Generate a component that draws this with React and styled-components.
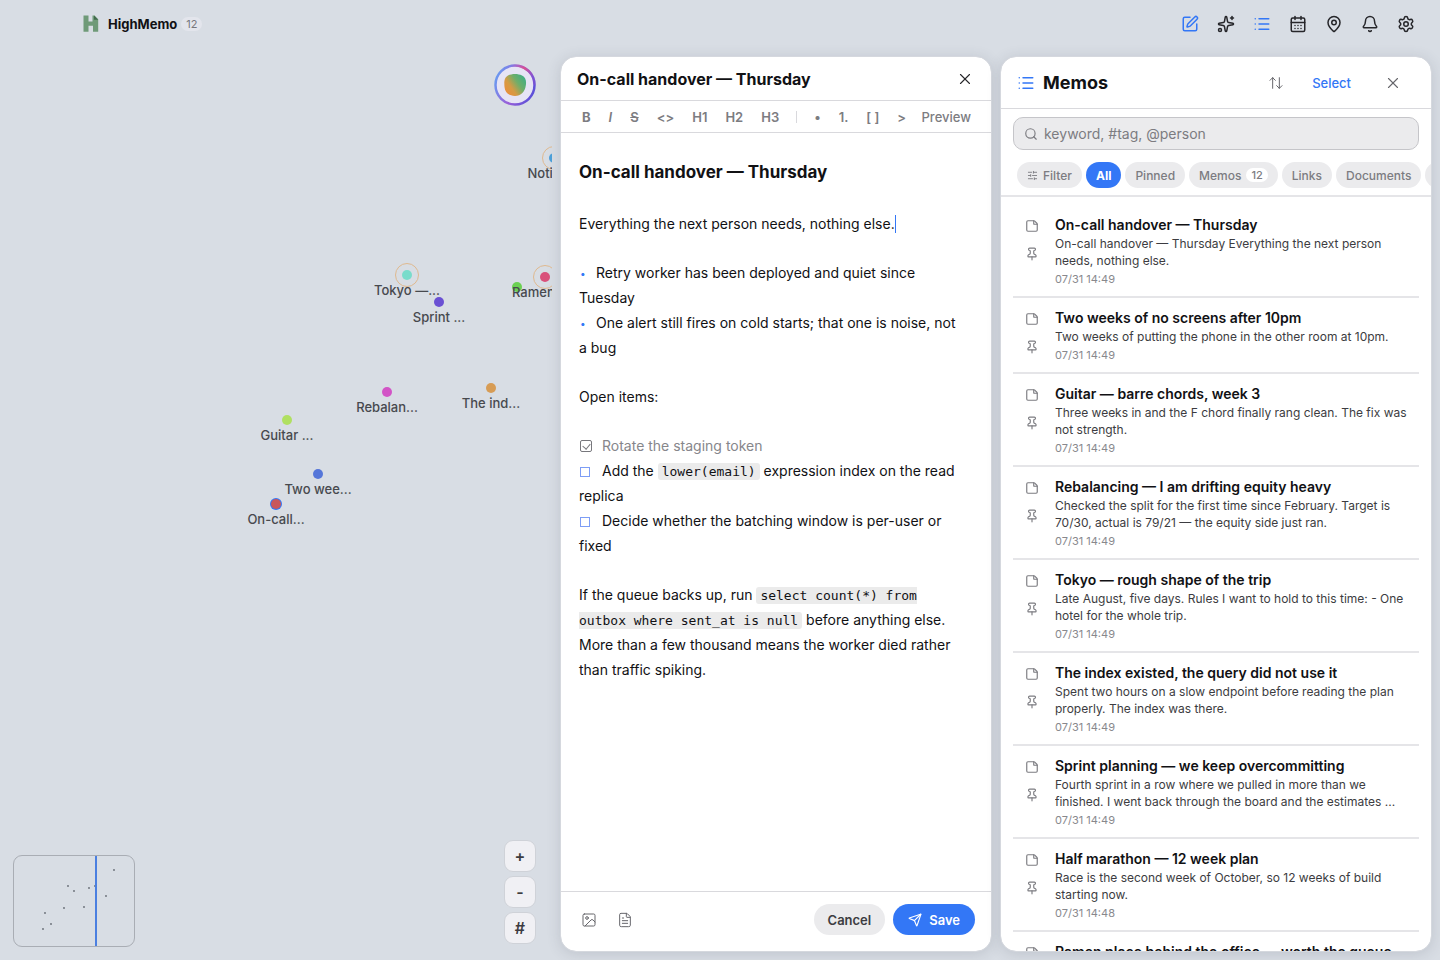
import React from 'react';
import styled, { createGlobalStyle, css } from 'styled-components';
import {
  ArrowUpDown,
  Bell,
  CalendarDays,
  FileText,
  Image,
  List,
  MapPin,
  Pin,
  Search,
  Send,
  Settings,
  SlidersHorizontal,
  Sparkles,
  SquarePen,
  StickyNote,
  X,
} from 'lucide-react';

const colors = {
  bg: '#d8dde4',
  panel: '#ffffff',
  black: '#111114',
  text: '#3c3c41',
  grey: '#7c7c81',
  fill: '#ebebed',
  line: '#d9d9dd',
  divider: '#e5e5e8',
  blue: '#3377f6',
};

const GlobalStyle = createGlobalStyle`
  * {
    box-sizing: border-box;
  }
  body {
    margin: 0;
    background: ${colors.bg};
    color: ${colors.black};
    font-family: Inter, 'Liberation Sans', sans-serif;
    font-size: 13px;
  }
  button,
  input {
    font: inherit;
    color: inherit;
  }
  button {
    margin: 0;
    padding: 0;
    border: 0;
    background: none;
    cursor: pointer;
  }
  h1, h2, h3, p, ul {
    margin: 0;
    padding: 0;
  }
`;

const flexCenter = css`
  display: flex;
  align-items: center;
  justify-content: center;
`;

const Page = styled.div`
  display: flex;
  flex-direction: column;
  height: 100vh;
  overflow: hidden;
`;

const Header = styled.header`
  display: flex;
  align-items: center;
  flex: 0 0 48px;
  padding: 0 16px 0 82px;
`;
const Brand = styled.h1`
  font-size: 13px;
  line-height: 20px;
  font-weight: 700;
  margin-left: 8px;
`;
const Count = styled.span`
  margin-left: 4px;
  padding: 0 5px;
  border-radius: 8px;
  background: #e3e5ec;
  color: #77777d;
  font-size: 11px;
  line-height: 14px;
`;
const Nav = styled.nav`
  display: flex;
  margin-left: auto;
`;
const NavButton = styled.button`
  ${flexCenter};
  width: 36px;
  height: 36px;
  color: ${props => (props.$active ? colors.blue : '#26262a')};
`;

const Main = styled.main`
  display: flex;
  flex: 1 1 auto;
  min-height: 0;
`;

const Canvas = styled.section`
  position: relative;
  flex: 1 1 auto;
  min-width: 0;
  overflow: hidden;
`;
const Node = styled.div`
  position: absolute;
  left: ${props => props.$x}px;
  top: ${props => props.$y}px;
  width: 0;
  height: 0;
  display: flex;
  justify-content: center;
`;
const Dot = styled.i`
  position: absolute;
  left: -5px;
  top: -5px;
  width: 10px;
  height: 10px;
  border-radius: 50%;
  background: ${props => props.$color};
  box-shadow: ${props => (props.$selected ? `0 0 0 1px ${colors.blue}` : 'none')};
`;
const Ring = styled.i`
  position: absolute;
  left: -12px;
  top: -12px;
  width: 24px;
  height: 24px;
  border-radius: 50%;
  border: 1px solid #dfb98f;
`;
const NodeLabel = styled.span`
  position: relative;
  margin-top: 7px;
  color: #47494e;
  font-size: 13px;
  font-weight: 500;
  line-height: 17px;
  white-space: nowrap;
`;
const Orb = styled.button`
  position: absolute;
  top: 16px;
  right: 16px;
  ${flexCenter};
  width: 42px;
  height: 42px;
`;
const MiniMap = styled.div`
  position: absolute;
  left: 13px;
  bottom: 13px;
  width: 122px;
  height: 92px;
  border: 1px solid #a9adb4;
  border-radius: 9px;
  overflow: hidden;
`;
const Zoom = styled.div`
  position: absolute;
  right: 16px;
  bottom: 16px;
  display: flex;
  flex-direction: column;
  gap: 4px;
`;
const ZoomButton = styled.button`
  ${flexCenter};
  width: 32px;
  height: 32px;
  border: 1px solid #cfd2d8;
  border-radius: 9px;
  background: #f0f0f4;
  color: ${colors.text};
  font-size: 16px;
  font-weight: 600;
`;

const Dock = styled.div`
  display: flex;
  gap: 8px;
  flex: 0 1 auto;
  padding: 8px;
`;
const Panel = styled.section`
  display: flex;
  flex-direction: column;
  width: 30vw;
  min-height: 0;
  border: 1px solid #d5d8de;
  border-radius: 16px;
  background: ${colors.panel};
  background-clip: padding-box;
  box-shadow: 0 2px 14px rgba(60, 70, 90, 0.16);
  overflow: hidden;
`;

const EditorHeader = styled.div`
  display: flex;
  align-items: center;
  flex: 0 0 44px;
  padding: 0 12px 0 16px;
  border-bottom: 1px solid ${colors.line};
`;
const EditorTitle = styled.h2`
  font-size: 16px;
  line-height: 24px;
  font-weight: 700;
`;
const IconButton = styled.button`
  ${flexCenter};
  width: 28px;
  height: 28px;
  color: ${props => (props.$dark ? '#26262a' : '#66666b')};
`;
const HeaderRight = styled.div`
  display: flex;
  align-items: center;
  gap: 22px;
  margin-left: auto;
`;
const Toolbar = styled.div`
  display: flex;
  align-items: center;
  flex: 0 0 32px;
  padding: 0 20px 0 12px;
  border-bottom: 1px solid ${colors.line};
  color: ${colors.grey};
`;
const Tool = styled.button`
  padding: 0 9px;
  font-size: 13px;
  line-height: 20px;
  font-weight: ${props => (props.$bold ? 700 : 600)};
  font-style: ${props => (props.$italic ? 'italic' : 'normal')};
  text-decoration: ${props => (props.$strike ? 'line-through' : 'none')};
  white-space: nowrap;
`;
const ToolDivider = styled.span`
  width: 1px;
  height: 12px;
  margin: 0 8px;
  background: ${colors.line};
`;
const PreviewButton = styled(Tool)`
  margin-left: auto;
  padding: 0;
  font-weight: 500;
`;

const Editor = styled.div`
  flex: 1 1 auto;
  min-height: 0;
  overflow: hidden;
  padding: 27px 22px 27px 18px;
  font-size: 14px;
  line-height: 25px;
`;
const DocTitle = styled.h2`
  font-size: 17px;
  line-height: 24px;
  font-weight: 700;
  margin-bottom: 27px;
`;
const Block = styled.div`
  margin-bottom: 24px;
`;
const Caret = styled.span`
  display: inline-block;
  width: 1px;
  height: 18px;
  background: ${colors.blue};
  vertical-align: -4px;
`;
const Bullet = styled.span`
  display: inline-block;
  width: 17px;
  padding-left: 1px;
  color: ${colors.blue};
  font-size: 10px;
  line-height: 1;
  vertical-align: 1px;
`;
const Task = styled.label`
  display: block;
  color: ${props => (props.$done ? '#86868b' : 'inherit')};
`;
const Check = styled.input`
  appearance: none;
  position: relative;
  width: ${props => (props.checked ? 12 : 10)}px;
  height: ${props => (props.checked ? 12 : 10)}px;
  margin: 0 ${props => (props.checked ? 10 : 12)}px 0 1px;
  border: 1px solid ${props => (props.checked ? '#77777c' : '#7d9df5')};
  border-radius: ${props => (props.checked ? 2 : 0)}px;
  vertical-align: -1px;

  &:checked:after {
    content: '';
    position: absolute;
    left: 3px;
    top: 1px;
    width: 4px;
    height: 6px;
    border: solid #77777c;
    border-width: 0 1px 1px 0;
    transform: rotate(40deg);
  }
`;
const Code = styled.code`
  padding: 1px 4px;
  border-radius: 3px;
  background: #ebebeb;
  font-family: 'DejaVu Sans Mono', monospace;
  font-size: 13px;
  line-height: 1;
`;
const EditorFooter = styled.div`
  display: flex;
  align-items: center;
  flex: 0 0 60px;
  padding: 0 16px 4px 14px;
  border-top: 1px solid ${colors.line};
  gap: 8px;
`;
const PillButton = styled.button`
  ${flexCenter};
  gap: 7px;
  height: 31px;
  padding: 0 ${props => (props.$primary ? 15 : 14)}px;
  margin-left: ${props => (props.$primary ? 0 : 'auto')};
  border-radius: 16px;
  background: ${props => (props.$primary ? colors.blue : colors.fill)};
  color: ${props => (props.$primary ? '#fff' : colors.text)};
  font-size: 13px;
  font-weight: 600;
`;

const ListHeader = styled.div`
  display: flex;
  align-items: center;
  flex: 0 0 52px;
  padding: 0 24px 0 16px;
  border-bottom: 1px solid ${colors.line};
  color: ${colors.blue};
`;
const ListTitle = styled.h2`
  margin-left: 8px;
  color: ${colors.black};
  font-size: 18px;
  line-height: 24px;
  font-weight: 700;
`;
const SelectButton = styled.button`
  padding-right: 6px;
  color: ${colors.blue};
  font-size: 13px;
  font-weight: 500;
`;
const SearchBox = styled.label`
  display: flex;
  align-items: center;
  gap: 6px;
  flex: 0 0 33px;
  margin: 8px 12px 0;
  padding: 0 10px;
  border: 1px solid #c5c5c9;
  border-radius: 10px;
  background: ${colors.fill};
  color: ${colors.grey};
`;
const SearchInput = styled.input`
  flex: 1 1 auto;
  min-width: 0;
  padding: 0;
  border: 0;
  outline: 0;
  background: none;
  font-size: 14px;

  &::placeholder {
    color: ${colors.grey};
    opacity: 1;
  }
`;
const Chips = styled.div`
  display: flex;
  gap: 4px;
  flex: 0 0 47px;
  padding: 12px 16px 0;
  border-bottom: 2px solid ${colors.divider};
  overflow: hidden;
`;
const Chip = styled.button`
  ${flexCenter};
  flex: 0 0 auto;
  gap: 5px;
  height: 26px;
  padding: 0 10px;
  border-radius: 13px;
  background: ${props => (props.$active ? colors.blue : colors.fill)};
  color: ${props => (props.$active ? '#fff' : colors.grey)};
  font-size: 12px;
  font-weight: ${props => (props.$active ? 700 : 500)};
`;
const ChipCount = styled.span`
  padding: 0 5px;
  border-radius: 7px;
  background: #fff;
  font-size: 11px;
  line-height: 14px;
`;

const MemoList = styled.ul`
  flex: 1 1 auto;
  min-height: 0;
  padding: 8px 12px 0;
  list-style: none;
  overflow: hidden;
`;
const MemoRow = styled.li`
  display: flex;
  gap: 16px;
  padding: 10px 8px 10px 12px;
  border-bottom: 2px solid ${colors.divider};
`;
const MemoIcons = styled.div`
  display: flex;
  flex-direction: column;
  align-items: center;
  gap: 14px;
  flex: 0 0 14px;
  padding-top: 4px;
  color: ${colors.grey};
`;
const PinButton = styled.button`
  ${flexCenter};
  color: inherit;
`;
const MemoBody = styled.div`
  flex: 1 1 auto;
  min-width: 0;
`;
const MemoTitle = styled.h3`
  font-size: 14px;
  line-height: 20px;
  font-weight: 600;
  white-space: nowrap;
`;
const MemoText = styled.p`
  color: ${colors.text};
  font-size: 12px;
  line-height: 17px;
  display: -webkit-box;
  -webkit-box-orient: vertical;
  -webkit-line-clamp: 2;
  overflow: hidden;
`;
const MemoDate = styled.p`
  margin-top: 3px;
  color: #88888d;
  font-size: 11px;
  line-height: 14px;
`;

const NAV = [
  { label: 'Write', Icon: SquarePen, active: true },
  { label: 'Assistant', Icon: Sparkles },
  { label: 'Memos', Icon: List, active: true },
  { label: 'Calendar', Icon: CalendarDays },
  { label: 'Places', Icon: MapPin },
  { label: 'Notifications', Icon: Bell },
  { label: 'Settings', Icon: Settings },
];

const NODES = [
  { x: 554, y: 110, color: '#4c9fd8', label: 'Notific...', ring: true },
  { x: 407, y: 227, color: '#79dccb', label: 'Tokyo —...', ring: true },
  { x: 439, y: 254, color: '#6a50d3', label: 'Sprint ...' },
  { x: 517, y: 239, color: '#6bd052' },
  { x: 545, y: 229, color: '#d9517b', label: 'Ramen p...', ring: true },
  { x: 387, y: 344, color: '#d254c6', label: 'Rebalan...' },
  { x: 491, y: 340, color: '#d79c55', label: 'The ind...' },
  { x: 287, y: 372, color: '#b0e061', label: 'Guitar ...' },
  { x: 318, y: 426, color: '#5576d9', label: 'Two wee...' },
  { x: 276, y: 456, color: '#c9575c', label: 'On-call...', selected: true },
];

const MINI_DOTS = [
  [100, 14], [54, 30], [60, 35], [75, 32], [81, 30], [92, 40],
  [50, 52], [70, 51], [31, 57], [37, 68], [29, 73], [82, 8],
];

const MEMOS = [
  {
    title: 'On-call handover — Thursday',
    text: 'On-call handover — Thursday Everything the next person needs, nothing else.',
    date: '07/31 14:49',
  },
  {
    title: 'Two weeks of no screens after 10pm',
    text: 'Two weeks of putting the phone in the other room at 10pm.',
    date: '07/31 14:49',
  },
  {
    title: 'Guitar — barre chords, week 3',
    text: 'Three weeks in and the F chord finally rang clean. The fix was not strength.',
    date: '07/31 14:49',
  },
  {
    title: 'Rebalancing — I am drifting equity heavy',
    text: 'Checked the split for the first time since February. Target is 70/30, actual is 79/21 — the equity side just ran.',
    date: '07/31 14:49',
  },
  {
    title: 'Tokyo — rough shape of the trip',
    text: 'Late August, five days. Rules I want to hold to this time: - One hotel for the whole trip.',
    date: '07/31 14:49',
  },
  {
    title: 'The index existed, the query did not use it',
    text: 'Spent two hours on a slow endpoint before reading the plan properly. The index was there.',
    date: '07/31 14:49',
  },
  {
    title: 'Sprint planning — we keep overcommitting',
    text: 'Fourth sprint in a row where we pulled in more than we finished. I went back through the board and the estimates ...',
    date: '07/31 14:49',
  },
  {
    title: 'Half marathon — 12 week plan',
    text: 'Race is the second week of October, so 12 weeks of build starting now.',
    date: '07/31 14:48',
  },
  {
    title: 'Ramen place behind the office — worth the queue',
    text: 'Go before noon.',
    date: '07/31 14:48',
  },
];

const Logo = () => (
  <svg width="18" height="20" viewBox="0 0 18 20" aria-hidden="true">
    <path
      d="M1.5 1.5h5v6h4v-6h2l3.7 3.8v12.500h-5.200v-6h-4.500v6h-5z"
      fill="#6f9a78"
    />
    <path d="M12 1.500l4.200 4.300h-4.200z" fill="#426b4c" />
  </svg>
);

const OrbArt = () => (
  <svg width="42" height="42" viewBox="0 0 42 42" aria-hidden="true">
    <defs>
      <linearGradient id="orbRing" x1="0" y1="0.3" x2="1" y2="0.7">
        <stop offset="0" stopColor="#6a9af0" />
        <stop offset="0.5" stopColor="#9a5fd8" />
        <stop offset="1" stopColor="#5a50d8" />
      </linearGradient>
      <linearGradient id="orbPink" x1="0" y1="0" x2="1" y2="0.5">
        <stop offset="0.2" stopColor="#d458a8" stopOpacity="0" />
        <stop offset="0.6" stopColor="#d8508f" />
        <stop offset="1" stopColor="#9a4fc8" stopOpacity="0.3" />
      </linearGradient>
      <linearGradient id="orbBlob" x1="0" y1="0.9" x2="1" y2="0.2">
        <stop offset="0" stopColor="#ee8b3c" />
        <stop offset="0.35" stopColor="#d69a44" />
        <stop offset="0.65" stopColor="#6fae6a" />
        <stop offset="1" stopColor="#3fae86" />
      </linearGradient>
    </defs>
    <circle cx="21" cy="21" r="19.500" fill="#e6e4f5" stroke="url(#orbRing)" strokeWidth="2.500" />
    <path
      d="M10 5a19.500 19.500 0 0 1 30.500 16"
      fill="none"
      stroke="url(#orbPink)"
      strokeWidth="2.500"
    />
    <path
      d="M14 11.500c4-2 10-2 14 0 4 2 4.500 6 3.800 10-.8 6-4.800 10.500-10.800 10.500-6 0-10-3.500-10.500-9-.4-4.500-.5-9.500 3.500-11.500z"
      fill="url(#orbBlob)"
    />
  </svg>
);

const MemoMap = () => (
  <Canvas aria-label="Memo map">
    {NODES.map((node, i) => (
      <Node key={i} $x={node.x} $y={node.y}>
        {node.ring && <Ring />}
        <Dot $color={node.color} $selected={node.selected} />
        {node.label && <NodeLabel>{node.label}</NodeLabel>}
      </Node>
    ))}
    <Orb type="button" aria-label="Open assistant">
      <OrbArt />
    </Orb>
    <MiniMap>
      <svg width="120" height="90" viewBox="0 0 120 90" aria-hidden="true">
        {MINI_DOTS.map(([x, y]) => (
          <circle key={`${x}-${y}`} cx={x} cy={y} r="0.900" fill="#666b74" />
        ))}
        <rect x="81" y="0" width="2" height="90" fill="#4b7fe0" />
      </svg>
    </MiniMap>
    <Zoom>
      <ZoomButton type="button" aria-label="Zoom in">+</ZoomButton>
      <ZoomButton type="button" aria-label="Zoom out">-</ZoomButton>
      <ZoomButton type="button" aria-label="Toggle grid">#</ZoomButton>
    </Zoom>
  </Canvas>
);

const MemoEditor = () => (
  <Panel>
    <EditorHeader>
      <EditorTitle>On-call handover — Thursday</EditorTitle>
      <HeaderRight>
        <IconButton type="button" aria-label="Close editor" $dark>
          <X size={18} strokeWidth={1.5} />
        </IconButton>
      </HeaderRight>
    </EditorHeader>
    <Toolbar>
      <Tool type="button" $bold>B</Tool>
      <Tool type="button" $italic>I</Tool>
      <Tool type="button" $strike>S</Tool>
      <Tool type="button">&lt;&gt;</Tool>
      <Tool type="button">H1</Tool>
      <Tool type="button">H2</Tool>
      <Tool type="button">H3</Tool>
      <ToolDivider />
      <Tool type="button">•</Tool>
      <Tool type="button">1.</Tool>
      <Tool type="button">[ ]</Tool>
      <Tool type="button">&gt;</Tool>
      <PreviewButton type="button">Preview</PreviewButton>
    </Toolbar>
    <Editor>
      <DocTitle>On-call handover — Thursday</DocTitle>
      <Block>
        Everything the next person needs, nothing else.
        <Caret />
      </Block>
      <Block>
        <p><Bullet>•</Bullet>Retry worker has been deployed and quiet since Tuesday</p>
        <p>
          <Bullet>•</Bullet>One alert still fires on cold starts; that one is noise, not
          {' a\u00a0bug'}
        </p>
      </Block>
      <Block>Open items:</Block>
      <Block>
        <Task $done>
          <Check type="checkbox" checked readOnly />
          Rotate the staging token
        </Task>
        <Task>
          <Check type="checkbox" checked={false} readOnly />
          Add the <Code>lower(email)</Code> expression index on the read replica
        </Task>
        <Task>
          <Check type="checkbox" checked={false} readOnly />
          Decide whether the batching window is per-user or fixed
        </Task>
      </Block>
      <Block>
        If the queue backs up, run <Code>select count(*) from outbox where sent_at is null</Code>{' '}
        before anything else. More than a few thousand means the worker died rather than traffic
        spiking.
      </Block>
    </Editor>
    <EditorFooter>
      <IconButton type="button" aria-label="Attach image">
        <Image size={16} strokeWidth={1.5} />
      </IconButton>
      <IconButton type="button" aria-label="Attach file">
        <FileText size={16} strokeWidth={1.5} />
      </IconButton>
      <PillButton type="button">Cancel</PillButton>
      <PillButton type="button" $primary>
        <Send size={14} strokeWidth={2} />
        Save
      </PillButton>
    </EditorFooter>
  </Panel>
);

const MemoPanel = () => (
  <Panel>
    <ListHeader>
      <List size={18} strokeWidth={2} />
      <ListTitle>Memos</ListTitle>
      <HeaderRight>
        <IconButton type="button" aria-label="Sort">
          <ArrowUpDown size={16} strokeWidth={1.5} />
        </IconButton>
        <SelectButton type="button">Select</SelectButton>
        <IconButton type="button" aria-label="Close list">
          <X size={18} strokeWidth={1.5} />
        </IconButton>
      </HeaderRight>
    </ListHeader>
    <SearchBox>
      <Search size={14} strokeWidth={2} />
      <SearchInput type="text" aria-label="Search memos" placeholder="keyword, #tag, @person" />
    </SearchBox>
    <Chips>
      <Chip type="button">
        <SlidersHorizontal size={11} strokeWidth={2} />
        Filter
      </Chip>
      <Chip type="button" $active>All</Chip>
      <Chip type="button">Pinned</Chip>
      <Chip type="button">
        Memos
        <ChipCount>12</ChipCount>
      </Chip>
      <Chip type="button">Links</Chip>
      <Chip type="button">Documents</Chip>
      <Chip type="button">Images</Chip>
    </Chips>
    <MemoList>
      {MEMOS.map(memo => (
        <MemoRow key={memo.title}>
          <MemoIcons>
            <StickyNote size={14} strokeWidth={2} />
            <PinButton type="button" aria-label={`Pin ${memo.title}`}>
              <Pin size={14} strokeWidth={2} />
            </PinButton>
          </MemoIcons>
          <MemoBody>
            <MemoTitle>{memo.title}</MemoTitle>
            <MemoText>{memo.text}</MemoText>
            <MemoDate>{memo.date}</MemoDate>
          </MemoBody>
        </MemoRow>
      ))}
    </MemoList>
  </Panel>
);

const App = () => (
  <Page>
    <GlobalStyle />
    <Header>
      <Logo />
      <Brand>HighMemo</Brand>
      <Count>12</Count>
      <Nav>
        {NAV.map(({ label, Icon, active }) => (
          <NavButton key={label} type="button" aria-label={label} $active={active}>
            <Icon size={18} strokeWidth={2} />
          </NavButton>
        ))}
      </Nav>
    </Header>
    <Main>
      <MemoMap />
      <Dock>
        <MemoEditor />
        <MemoPanel />
      </Dock>
    </Main>
  </Page>
);

export default App;
